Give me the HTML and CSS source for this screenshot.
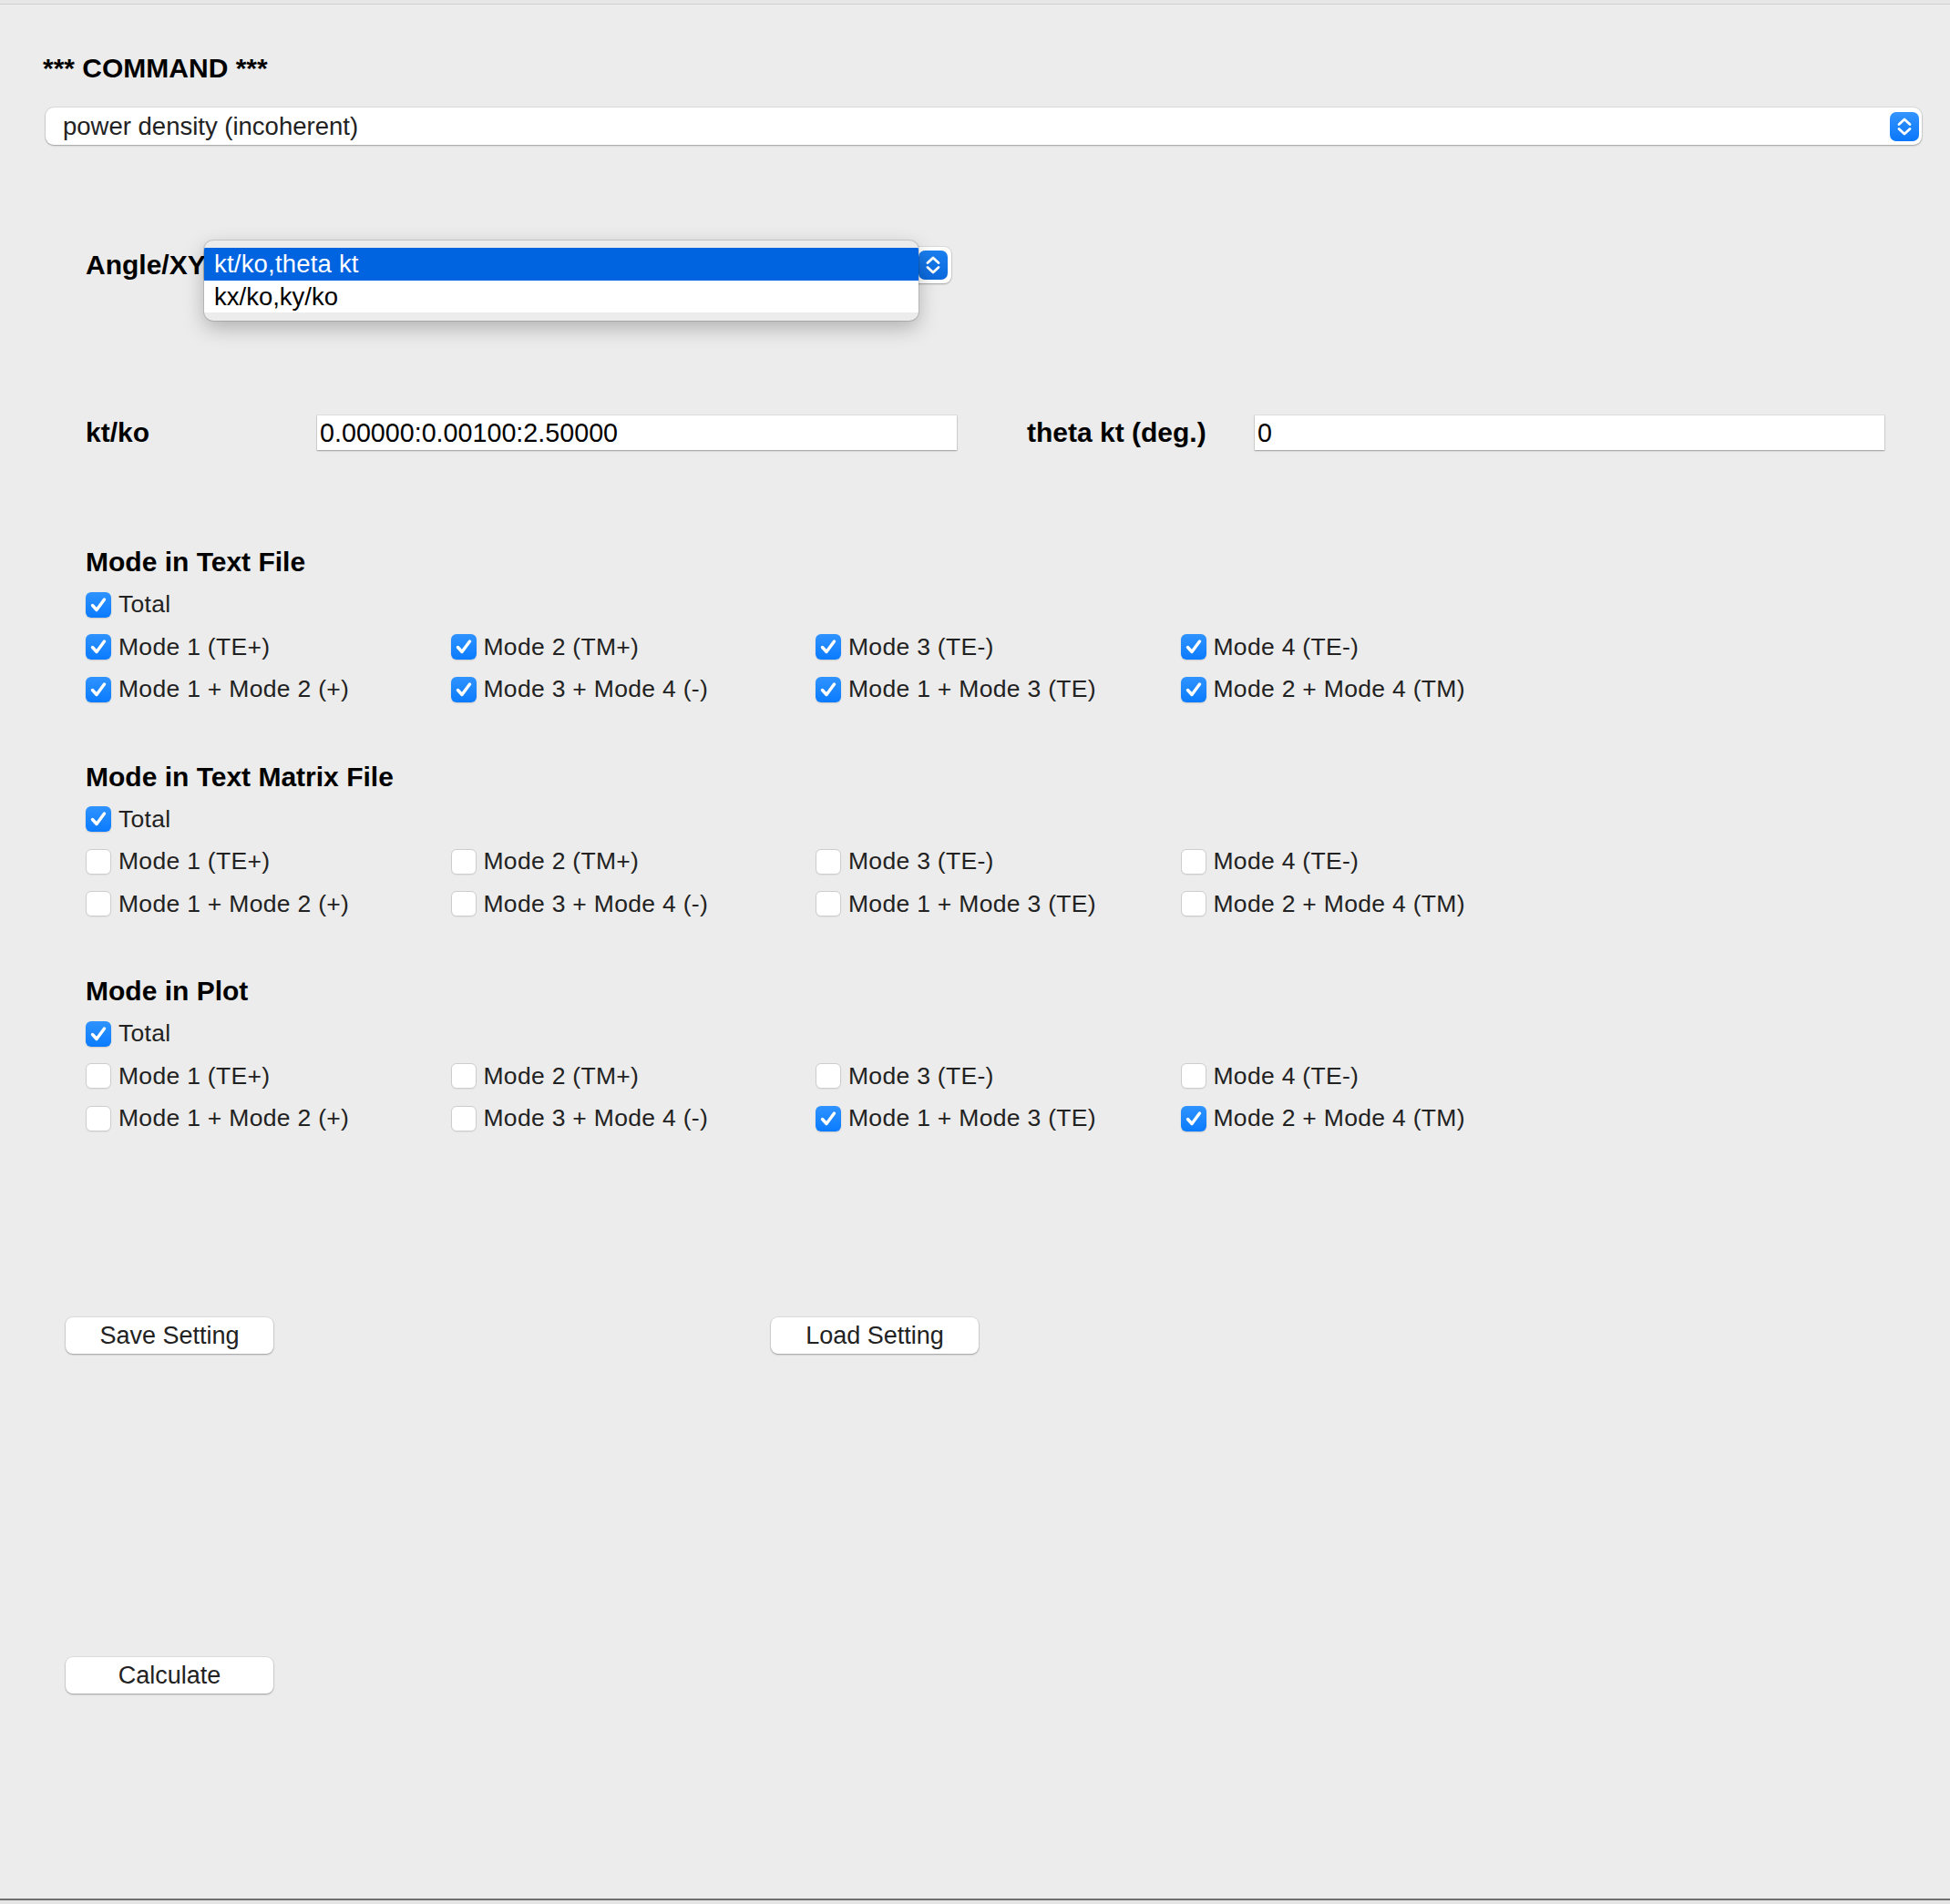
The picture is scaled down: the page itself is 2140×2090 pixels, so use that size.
FILE: index.html
```html
<!DOCTYPE html>
<html>
<head>
<meta charset="utf-8">
<link rel="stylesheet" href="styles.css">
</head>
<body>
<div class="titlebar"></div>
<main class="content">
  <h1 class="cmd-title">*** COMMAND ***</h1>
  <div class="cmd-select">
    <span class="select-text">power density (incoherent)</span>
    <span class="stepper">
      <svg viewBox="0 0 32 32" width="32" height="32"><path d="M10 13.5 L16 8 L22 13.5 M10 18.5 L16 24 L22 18.5" fill="none" stroke="#fff" stroke-width="2.8" stroke-linecap="round" stroke-linejoin="round"/></svg>
    </span>
  </div>

  <div class="angle-row">
    <span class="bold-label angle-label">Angle/XY</span>
    <div class="angle-select">
      <span class="stepper stepper-dim">
        <svg viewBox="0 0 32 32" width="32" height="32"><path d="M10 13.5 L16 8 L22 13.5 M10 18.5 L16 24 L22 18.5" fill="none" stroke="#fff" stroke-width="2.8" stroke-linecap="round" stroke-linejoin="round"/></svg>
      </span>
      <div class="popup">
        <div class="popup-row selected">kt/ko,theta kt</div>
        <div class="popup-row">kx/ko,ky/ko</div>
      </div>
    </div>
  </div>

  <div class="kt-row">
    <span class="bold-label">kt/ko</span>
    <div class="text-input">0.00000:0.00100:2.50000</div>
    <span></span>
    <span class="bold-label">theta kt (deg.)</span>
    <div class="text-input">0</div>
  </div>

  <section class="mode-section first">
    <h2 class="section-title">Mode in Text File</h2>
    <div class="cb-grid">
      <label class="cb-item total"><span class="cb on"><svg viewBox="0 0 28 28"><path d="M7.5 14.5 L12 19.5 L20.5 8" fill="none" stroke="#fff" stroke-width="3.4" stroke-linecap="round" stroke-linejoin="round"/></svg></span>Total</label>
      <label class="cb-item"><span class="cb on"><svg viewBox="0 0 28 28"><path d="M7.5 14.5 L12 19.5 L20.5 8" fill="none" stroke="#fff" stroke-width="3.4" stroke-linecap="round" stroke-linejoin="round"/></svg></span>Mode 1 (TE+)</label>
      <label class="cb-item"><span class="cb on"><svg viewBox="0 0 28 28"><path d="M7.5 14.5 L12 19.5 L20.5 8" fill="none" stroke="#fff" stroke-width="3.4" stroke-linecap="round" stroke-linejoin="round"/></svg></span>Mode 2 (TM+)</label>
      <label class="cb-item"><span class="cb on"><svg viewBox="0 0 28 28"><path d="M7.5 14.5 L12 19.5 L20.5 8" fill="none" stroke="#fff" stroke-width="3.4" stroke-linecap="round" stroke-linejoin="round"/></svg></span>Mode 3 (TE-)</label>
      <label class="cb-item"><span class="cb on"><svg viewBox="0 0 28 28"><path d="M7.5 14.5 L12 19.5 L20.5 8" fill="none" stroke="#fff" stroke-width="3.4" stroke-linecap="round" stroke-linejoin="round"/></svg></span>Mode 4 (TE-)</label>
      <label class="cb-item"><span class="cb on"><svg viewBox="0 0 28 28"><path d="M7.5 14.5 L12 19.5 L20.5 8" fill="none" stroke="#fff" stroke-width="3.4" stroke-linecap="round" stroke-linejoin="round"/></svg></span>Mode 1 + Mode 2 (+)</label>
      <label class="cb-item"><span class="cb on"><svg viewBox="0 0 28 28"><path d="M7.5 14.5 L12 19.5 L20.5 8" fill="none" stroke="#fff" stroke-width="3.4" stroke-linecap="round" stroke-linejoin="round"/></svg></span>Mode 3 + Mode 4 (-)</label>
      <label class="cb-item"><span class="cb on"><svg viewBox="0 0 28 28"><path d="M7.5 14.5 L12 19.5 L20.5 8" fill="none" stroke="#fff" stroke-width="3.4" stroke-linecap="round" stroke-linejoin="round"/></svg></span>Mode 1 + Mode 3 (TE)</label>
      <label class="cb-item"><span class="cb on"><svg viewBox="0 0 28 28"><path d="M7.5 14.5 L12 19.5 L20.5 8" fill="none" stroke="#fff" stroke-width="3.4" stroke-linecap="round" stroke-linejoin="round"/></svg></span>Mode 2 + Mode 4 (TM)</label>
    </div>
  </section>

  <section class="mode-section">
    <h2 class="section-title">Mode in Text Matrix File</h2>
    <div class="cb-grid">
      <label class="cb-item total"><span class="cb on"><svg viewBox="0 0 28 28"><path d="M7.5 14.5 L12 19.5 L20.5 8" fill="none" stroke="#fff" stroke-width="3.4" stroke-linecap="round" stroke-linejoin="round"/></svg></span>Total</label>
      <label class="cb-item"><span class="cb"></span>Mode 1 (TE+)</label>
      <label class="cb-item"><span class="cb"></span>Mode 2 (TM+)</label>
      <label class="cb-item"><span class="cb"></span>Mode 3 (TE-)</label>
      <label class="cb-item"><span class="cb"></span>Mode 4 (TE-)</label>
      <label class="cb-item"><span class="cb"></span>Mode 1 + Mode 2 (+)</label>
      <label class="cb-item"><span class="cb"></span>Mode 3 + Mode 4 (-)</label>
      <label class="cb-item"><span class="cb"></span>Mode 1 + Mode 3 (TE)</label>
      <label class="cb-item"><span class="cb"></span>Mode 2 + Mode 4 (TM)</label>
    </div>
  </section>

  <section class="mode-section">
    <h2 class="section-title">Mode in Plot</h2>
    <div class="cb-grid">
      <label class="cb-item total"><span class="cb on"><svg viewBox="0 0 28 28"><path d="M7.5 14.5 L12 19.5 L20.5 8" fill="none" stroke="#fff" stroke-width="3.4" stroke-linecap="round" stroke-linejoin="round"/></svg></span>Total</label>
      <label class="cb-item"><span class="cb"></span>Mode 1 (TE+)</label>
      <label class="cb-item"><span class="cb"></span>Mode 2 (TM+)</label>
      <label class="cb-item"><span class="cb"></span>Mode 3 (TE-)</label>
      <label class="cb-item"><span class="cb"></span>Mode 4 (TE-)</label>
      <label class="cb-item"><span class="cb"></span>Mode 1 + Mode 2 (+)</label>
      <label class="cb-item"><span class="cb"></span>Mode 3 + Mode 4 (-)</label>
      <label class="cb-item"><span class="cb on"><svg viewBox="0 0 28 28"><path d="M7.5 14.5 L12 19.5 L20.5 8" fill="none" stroke="#fff" stroke-width="3.4" stroke-linecap="round" stroke-linejoin="round"/></svg></span>Mode 1 + Mode 3 (TE)</label>
      <label class="cb-item"><span class="cb on"><svg viewBox="0 0 28 28"><path d="M7.5 14.5 L12 19.5 L20.5 8" fill="none" stroke="#fff" stroke-width="3.4" stroke-linecap="round" stroke-linejoin="round"/></svg></span>Mode 2 + Mode 4 (TM)</label>
    </div>
  </section>

  <div class="button-row">
    <button class="btn">Save Setting</button>
    <button class="btn load">Load Setting</button>
  </div>
  <div class="calc-row">
    <button class="btn">Calculate</button>
  </div>
</main>
<div class="statusline"></div>
</body>
</html>
```
FILE: styles.css
```css
html, body {
  margin: 0;
  padding: 0;
}
body {
  background: #ececec;
  font-family: "Liberation Sans", Arial, sans-serif;
  color: #222;
  min-height: 100vh;
  display: flex;
  flex-direction: column;
}
.titlebar {
  height: 4px;
  background: #e7e7e7;
  border-bottom: 1px solid #d0d0d0;
  flex: none;
}
.content {
  flex: none;
}
.cmd-title {
  margin: 52px 0 0 47px;
  font-size: 30px;
  line-height: 36px;
  font-weight: bold;
  color: #000;
}
.cmd-select {
  margin: 25px 0 0 50px;
  width: 2059px;
  height: 41px;
  box-sizing: border-box;
  background: #fff;
  border-radius: 9px;
  box-shadow: 0 0 0 1px rgba(0,0,0,0.07), 0 1px 2px rgba(0,0,0,0.28);
  display: flex;
  align-items: center;
  justify-content: space-between;
  padding: 0 3px 0 19px;
}
.select-text {
  font-size: 27.5px;
  color: #222;
}
.stepper {
  width: 32px;
  height: 32px;
  border-radius: 7px;
  background: linear-gradient(#3494ff, #0a77fb);
  display: block;
}
.stepper svg {
  display: block;
}
.stepper-dim {
  background: linear-gradient(#1a7ff0, #0a68dc);
}
.angle-row {
  margin: 112px 0 0 94px;
  height: 40px;
  display: flex;
  align-items: center;
}
.bold-label {
  font-size: 30px;
  font-weight: bold;
  color: #000;
  white-space: nowrap;
}
.angle-label {
  width: 130px;
}
.angle-select {
  position: relative;
  width: 820px;
  height: 40px;
  box-sizing: border-box;
  background: #fff;
  border-radius: 8px;
  box-shadow: 0 0 0 1px rgba(0,0,0,0.07), 0 1px 2px rgba(0,0,0,0.25);
  display: flex;
  justify-content: flex-end;
  align-items: center;
  padding-right: 4px;
}
.popup {
  position: absolute;
  left: 0;
  top: -7px;
  width: 784px;
  height: 88px;
  box-sizing: border-box;
  padding: 8px 0 9px;
  background: #ececec;
  border-radius: 10px;
  box-shadow: 0 0 0 1px rgba(0,0,0,0.13), 0 8px 22px rgba(0,0,0,0.25);
  z-index: 2;
  overflow: hidden;
}
.popup-row {
  height: 35.5px;
  line-height: 35.5px;
  padding-left: 11px;
  font-size: 27.5px;
  background: #fff;
  color: #000;
}
.popup-row.selected {
  background: #0064e1;
  color: #fff;
  letter-spacing: 0.2px;
}
.kt-row {
  margin: 145px 0 0 94px;
  height: 38px;
  display: grid;
  grid-template-columns: 254px 702px 77px 250px 691px;
  align-items: center;
}
.text-input {
  height: 38px;
  box-sizing: border-box;
  background: #fff;
  box-shadow: 0 0 0 1px rgba(0,0,0,0.06), 0 1px 1.5px rgba(0,0,0,0.3);
  font-size: 28.7px;
  line-height: 38px;
  padding-left: 3px;
  color: #000;
}
.mode-section {
  margin: 54.75px 0 0 94px;
}
.mode-section.first {
  margin-top: 105px;
}
.section-title {
  margin: 0;
  font-size: 30px;
  line-height: 36px;
  font-weight: bold;
  color: #000;
}
.cb-grid {
  margin-top: 5.25px;
  display: grid;
  grid-template-columns: repeat(4, 400.5px);
  grid-auto-rows: 46.5px;
  align-items: center;
}
.cb-item {
  display: flex;
  align-items: center;
  font-size: 26.5px;
  letter-spacing: 0.3px;
  color: #222;
  white-space: nowrap;
}
.cb-item.total {
  grid-column: 1 / span 4;
}
.cb {
  width: 28px;
  height: 28px;
  box-sizing: border-box;
  border-radius: 6px;
  margin-right: 8px;
  background: #fff;
  border: 1px solid #cdcdcd;
  box-shadow: 0 1px 1px rgba(0,0,0,0.05);
  flex: none;
  display: block;
}
.cb.on {
  border: none;
  background: linear-gradient(#2f93ff, #0a7bff);
  box-shadow: 0 1px 1.5px rgba(0,0,0,0.15);
}
.cb svg {
  display: block;
  width: 28px;
  height: 28px;
}
.button-row {
  margin: 195.25px 0 0 72px;
  display: flex;
  gap: 546px;
}
.calc-row {
  margin: 333px 0 0 72px;
}
.btn {
  width: 228px;
  height: 40px;
  border: none;
  border-radius: 8px;
  background: #fff;
  box-shadow: 0 0 0 1px rgba(0,0,0,0.06), 0 1px 2px rgba(0,0,0,0.3);
  font-family: "Liberation Sans", Arial, sans-serif;
  font-size: 27px;
  color: #222;
  padding: 0;
  display: block;
}
.statusline {
  margin-top: auto;
  flex: none;
  height: 4px;
  border-top: 2px solid #707070;
  background: #e4e4e4;
}
```
